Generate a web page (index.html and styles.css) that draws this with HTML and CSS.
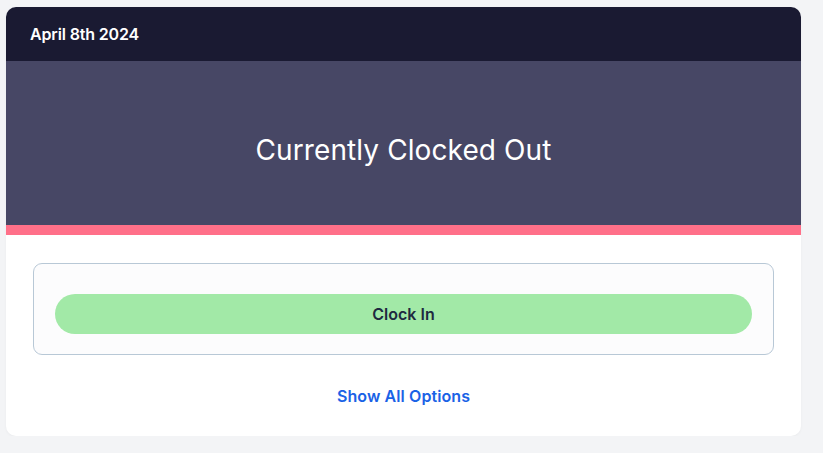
FILE: index.html
```html
<!DOCTYPE html>
<html lang="en">
<head>
    <meta charset="UTF-8">
    <meta name="viewport" content="width=device-width, initial-scale=1.0">
    <title>Time Clock</title>
    <link rel="stylesheet" href="styles.css">
</head>
<body>
    <div class="card">
        <div class="card-header">April 8th 2024</div>
        <div class="status">
            <h1>Currently Clocked Out</h1>
        </div>
        <div class="card-body">
            <div class="actions">
                <button type="button" class="clock-btn">Clock In</button>
            </div>
            <a href="#" class="options-link">Show All Options</a>
        </div>
    </div>
</body>
</html>
```

FILE: styles.css
```css
body {
    font-family: 'Inter', 'Noto Sans', sans-serif;
    margin: 0;
    padding: 7px 0 0 6px;
    background-color: #f3f4f6;
}

.card {
    width: 795px;
    background-color: #fff;
    border-radius: 10px;
    overflow: hidden;
    box-shadow: 0 1px 3px rgba(0, 0, 0, 0.04);
}

.card-header {
    height: 54px;
    display: flex;
    align-items: center;
    padding: 0 24px;
    background-color: #1a1a32;
    color: #fff;
    font-size: 16px;
    font-weight: 600;
    letter-spacing: -0.15px;
}

.status {
    height: 174px;
    box-sizing: border-box;
    padding-top: 72px;
    background-color: #474765;
    border-bottom: 10px solid #ff7089;
}

.status h1 {
    margin: 0;
    text-align: center;
    color: #fff;
    font-size: 28px;
    font-weight: 400;
    letter-spacing: 0.1px;
    line-height: 34px;
}

.card-body {
    padding: 28px 27px 0;
    text-align: center;
}

.actions {
    padding: 30px 21px 20px;
    background-color: #fcfcfd;
    border: 1px solid #b8c8d6;
    border-radius: 9px;
}

.clock-btn {
    display: block;
    width: 100%;
    height: 40px;
    border: none;
    border-radius: 20px;
    background-color: #a2e9a7;
    color: #1e2a40;
    font-family: inherit;
    font-size: 16px;
    font-weight: 600;
    cursor: pointer;
}

.options-link {
    display: inline-block;
    margin: 29px 0 28px;
    line-height: 24px;
    color: #1a62e6;
    font-size: 16px;
    font-weight: 600;
    letter-spacing: 0.1px;
    text-decoration: none;
}

.options-link:hover {
    text-decoration: underline;
}
```
